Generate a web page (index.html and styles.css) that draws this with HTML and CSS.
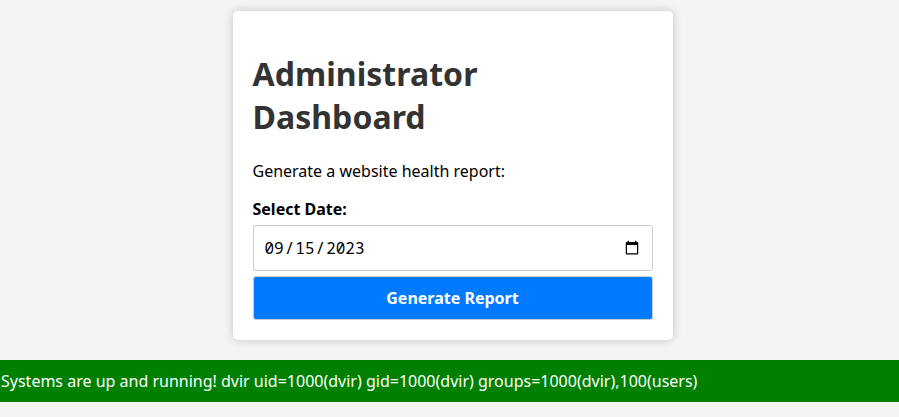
FILE: index.html
```html
<!DOCTYPE html>
<html lang="en">
<head>
<meta charset="utf-8">
<title>Administrator Dashboard</title>
<link rel="stylesheet" href="styles.css">
</head>
<body>
<main class="container">
<h1>Administrator Dashboard</h1>
<p>Generate a website health report:</p>
<form>
<label for="date">Select Date:</label>
<input class="field date" type="date" id="date" value="2023-09-15">
<input class="field submit" type="submit" value="Generate Report">
</form>
</main>
<div class="status">Systems are up and running! dvir uid=1000(dvir) gid=1000(dvir) groups=1000(dvir),100(users)</div>
</body>
</html>
```
FILE: styles.css
```css
body {
  margin: 0;
  background: #f4f4f4;
  font: 16px/22px "Noto Sans", sans-serif;
  color: #000;
  overflow: hidden;
}
.container {
  width: 400px;
  margin: 11px 0 0 232.5px;
  padding: 20px;
  height: 289px;
  background: #fff;
  border-radius: 5px;
  box-shadow: 0 0 10px rgba(0, 0, 0, 0.2);
}
h1 {
  margin: 21px 0 22px;
  font-size: 32px;
  line-height: 43px;
  letter-spacing: 0.04px;
  color: #333;
}
p {
  margin: 0 0 16px;
}
label {
  display: block;
  font-weight: bold;
  margin-bottom: 5px;
}
.field {
  display: block;
  box-sizing: border-box;
  width: 400px;
  height: 46px;
  margin: 0 0 5px;
  padding: 10px;
  border: 1px solid #ccc;
  border-radius: 3px;
  background: #fff;
  font: 16px "Noto Sans", sans-serif;
}
.date {
  font-family: "Noto Sans Mono", "Noto Mono", "DejaVu Sans Mono", monospace;
}
.submit {
  height: 44px;
  margin: 0;
  background: #007bff;
  color: #fff;
  font-weight: bold;
}
.status {
  margin-top: 20px;
  padding: 10px 1px;
  background: green;
  color: #fff;
}
```
